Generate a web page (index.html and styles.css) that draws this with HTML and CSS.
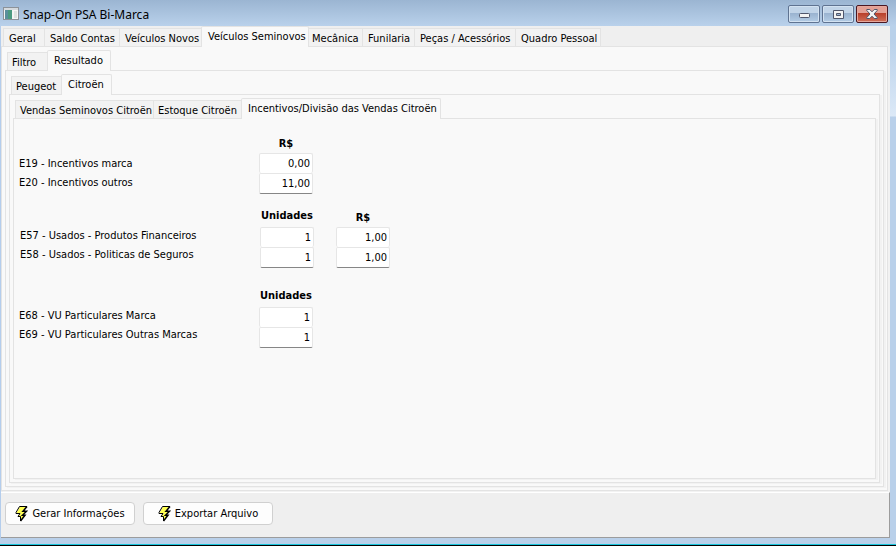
FILE: index.html
```
<!DOCTYPE html>
<html lang="pt-BR">
<head>
    <meta charset="UTF-8">
    <meta name="viewport" content="width=device-width, initial-scale=1.0">
    <title>Snap-On PSA Bi-Marca</title>
    <link rel="stylesheet" href="styles.css">
</head>
<body>
    <header class="titlebar">
        <svg class="app-icon" width="16" height="14" viewBox="0 0 16 14" aria-hidden="true">
            <rect x="0.5" y="0.5" width="15" height="12" fill="#f4f4f4" stroke="#8c9299"/>
            <rect x="1" y="1" width="14" height="2" fill="#d5dade"/>
            <rect x="2" y="3" width="7" height="9" fill="#4b9a80"/>
            <rect x="2" y="3" width="3" height="9" fill="#5a8f9c"/>
            <rect x="11" y="4" width="3" height="7" fill="#dde3e0"/>
        </svg>
        <h1>Snap-On PSA Bi-Marca</h1>
        <div class="window-buttons">
            <button type="button" class="win-btn" aria-label="Minimizar">
                <svg width="11" height="5" viewBox="0 0 11 5"><rect x="0.5" y="0.5" width="10" height="4" rx="1" fill="#f3f3f3" stroke="#50566b"/></svg>
            </button>
            <button type="button" class="win-btn win-max" aria-label="Maximizar">
                <svg width="11" height="9" viewBox="0 0 11 9"><path fill-rule="evenodd" fill="#f3f3f3" stroke="#50566b" d="M.5.5h10v8H.5zM3.500 3.500v2h4v-2z"/></svg>
            </button>
            <button type="button" class="win-btn win-close" aria-label="Fechar">
                <svg width="12" height="10" viewBox="0 0 12 10"><path fill="#f3f3f3" stroke="#50566b" d="M.8.5h3L6 2.800 8.200.5h3v1L8 5l3.200 3.500v1h-3L6 7.200 3.800 9.500h-3v-1L4 5 .8 1.500z"/></svg>
            </button>
        </div>
    </header>

    <main class="window">
        <div class="tabs tabs-main" role="tablist">
            <button type="button" role="tab" class="tab">Geral</button>
            <button type="button" role="tab" class="tab">Saldo Contas</button>
            <button type="button" role="tab" class="tab">Veículos Novos</button>
            <button type="button" role="tab" class="tab active" aria-selected="true">Veículos Seminovos</button>
            <button type="button" role="tab" class="tab">Mecânica</button>
            <button type="button" role="tab" class="tab">Funilaria</button>
            <button type="button" role="tab" class="tab">Peças / Acessórios</button>
            <button type="button" role="tab" class="tab">Quadro Pessoal</button>
        </div>
        <section class="panel panel-main">
            <div class="tabs tabs-view" role="tablist">
                <button type="button" role="tab" class="tab">Filtro</button>
                <button type="button" role="tab" class="tab active" aria-selected="true">Resultado</button>
            </div>
            <section class="panel">
                <div class="tabs tabs-brand" role="tablist">
                    <button type="button" role="tab" class="tab">Peugeot</button>
                    <button type="button" role="tab" class="tab active" aria-selected="true">Citroën</button>
                </div>
                <section class="panel">
                    <div class="tabs tabs-report" role="tablist">
                        <button type="button" role="tab" class="tab">Vendas Seminovos Citroën</button>
                        <button type="button" role="tab" class="tab">Estoque Citroën</button>
                        <button type="button" role="tab" class="tab active" aria-selected="true">Incentivos/Divisão das Vendas Citroën</button>
                    </div>
                    <section class="panel panel-form">
                        <form id="reportForm">
                            <div class="group group-incentivos">
                                <div class="labels">
                                    <label for="e19">E19 - Incentivos marca</label>
                                    <label for="e20">E20 - Incentivos outros</label>
                                </div>
                                <div class="fields">
                                    <h2 class="money">R$</h2>
                                    <input type="text" id="e19" value="0,00">
                                    <input type="text" id="e20" value="11,00">
                                </div>
                            </div>
                            <div class="group group-usados">
                                <div class="labels">
                                    <label for="e57">E57 - Usados - Produtos Financeiros</label>
                                    <label for="e58">E58 - Usados - Politicas de Seguros</label>
                                </div>
                                <div class="fields">
                                    <h2>Unidades</h2>
                                    <input type="text" id="e57" value="1">
                                    <input type="text" id="e58" value="1">
                                </div>
                                <div class="fields">
                                    <h2 class="money">R$</h2>
                                    <input type="text" aria-label="E57 R$" value="1,00">
                                    <input type="text" aria-label="E58 R$" value="1,00">
                                </div>
                            </div>
                            <div class="group group-vu">
                                <div class="labels">
                                    <label for="e68">E68 - VU Particulares Marca</label>
                                    <label for="e69">E69 - VU Particulares Outras Marcas</label>
                                </div>
                                <div class="fields">
                                    <h2>Unidades</h2>
                                    <input type="text" id="e68" value="1">
                                    <input type="text" id="e69" value="1">
                                </div>
                            </div>
                        </form>
                    </section>
                </section>
            </section>
        </section>
        <footer class="actions">
            <button type="button" class="action-btn">
                <svg width="13" height="16" viewBox="0 0 13 16" aria-hidden="true"><path fill="#ffff50" d="M5 1h6L7 5.500h4L6.500 9.500H9L6 14v-3.500H3L6 7H1.500z"/><path fill="none" stroke="#000" d="M12 .5H4.500L1 6.500V7.500h4L3 10.500h2.500V15"/><path fill="none" stroke="#000" stroke-width="1.500" d="M12 .5 8 5.200h3.500L7.500 9.200H10L5.500 15"/></svg>
                Gerar Informações
            </button>
            <button type="button" class="action-btn">
                <svg width="13" height="16" viewBox="0 0 13 16" aria-hidden="true"><path fill="#ffff50" d="M5 1h6L7 5.500h4L6.500 9.500H9L6 14v-3.500H3L6 7H1.500z"/><path fill="none" stroke="#000" d="M12 .5H4.500L1 6.500V7.500h4L3 10.500h2.500V15"/><path fill="none" stroke="#000" stroke-width="1.500" d="M12 .5 8 5.200h3.500L7.500 9.200H10L5.500 15"/></svg>
                Exportar Arquivo
            </button>
        </footer>
    </main>
    <div class="taskbar"></div>
</body>
</html>
```
FILE: styles.css
```
* {
    box-sizing: border-box;
}
body {
    font-family: "DejaVu Sans Condensed", "DejaVu Sans", Tahoma, sans-serif;
    font-size: 11px;
    color: #000;
    margin: 0;
    min-height: 100vh;
    display: flex;
    flex-direction: column;
    background: linear-gradient(#b9d1ea 40px, #dce9f7 116px, #b9d0ea 117px);
}
button, input {
    font: inherit;
    color: inherit;
}

/* title bar */
.titlebar {
    display: flex;
    align-items: center;
    height: 26px;
    padding: 0 8px 0 3px;
    background: linear-gradient(#9bb5d2, #b9d1eb);
}
.titlebar h1 {
    flex: 1;
    margin: 0 0 0 4px;
    padding-top: 3px;
    font: 12px "Noto Sans", "Open Sans", sans-serif;
}
.app-icon {
    margin-top: 2px;
}
.window-buttons {
    display: flex;
    gap: 2px;
    padding-top: 2px;
}
.win-btn {
    display: flex;
    align-items: center;
    justify-content: center;
    width: 32px;
    height: 18px;
    padding: 0;
    border: 1px solid #5f7391;
    border-radius: 2px;
    box-shadow: inset 0 0 0 1px #d3e2f1;
    background: linear-gradient(#c1d4e8 45%, #9ab3d0 46%, #b3cce5);
}
.win-btn:first-child {
    padding-top: 3px;
}
.win-close {
    border-color: #4a1722;
    box-shadow: inset 0 0 0 1px #e5a79c;
    background: linear-gradient(#e3a095 45%, #b9402b 46%, #d0705a);
}

/* window */
.window {
    flex: 1;
    display: flex;
    flex-direction: column;
    margin: 0 6px 6px 0;
    border-left: 1px solid #b4cdec;
    background: #efefef;
}
.tabs {
    display: grid;
    align-items: end;
    height: 20px;
    padding-left: 2px;
}
.tabs-main {
    grid-template-columns: 41px 75px 82px 107px 54px 52px 101px 86px;
}
.tabs-view {
    grid-template-columns: 40px 63px;
}
.tabs-brand {
    grid-template-columns: 50px 50px;
}
.tabs-report {
    grid-template-columns: 138px 88px 199px;
}
.tab {
    height: 18px;
    padding: 2px 0 0 4px;
    border: 1px solid #e3e3e3;
    border-right: none;
    border-bottom: none;
    background: #f2f2f2;
    text-align: left;
    white-space: nowrap;
}
.tabs-main .tab {
    padding-left: 5px;
}
.tab:last-child {
    border-right: 1px solid #e3e3e3;
}
.tab.active {
    height: 21px;
    margin: 0 -1px -1px 0;
    padding: 0 0 1px 6px;
    border: 1px solid #e3e3e3;
    border-bottom: none;
    border-radius: 2px 2px 0 0;
    background: #f9f9f9;
    z-index: 1;
}
.tab.active + .tab {
    padding-left: 3px;
}
.panel {
    flex: 1;
    display: flex;
    flex-direction: column;
    padding: 3px;
    border: 1px solid #e3e3e3;
    box-shadow: 2px 1px 0 #f2f2f2;
    background: #f9f9f9;
}
.panel-main {
    margin-right: 2px;
}

/* form */
.panel-form {
    padding: 17px 5px;
}
.group {
    display: flex;
    align-items: flex-end;
}
.group-usados {
    margin-top: 14px;
    padding-left: 1px;
}
.group-vu {
    margin-top: 20px;
}
.labels {
    width: 240px;
    margin-bottom: 4px;
}
.group-incentivos .labels {
    margin-bottom: 2px;
}
.labels label {
    display: block;
    line-height: 19px;
}
.fields {
    display: flex;
    flex-direction: column;
    width: 54px;
    margin-right: 22px;
}
.fields h2 {
    margin: 0 0 3px;
    font-size: 11px;
    line-height: 16px;
    text-align: center;
}
.fields .money {
    margin-bottom: 1px;
}
.fields input {
    width: 100%;
    height: 20px;
    padding: 0 2px;
    border: 1px solid #e6e6e6;
    border-bottom: none;
    border-radius: 2px;
    background: #fff;
    text-align: right;
}
.fields input:last-child {
    height: 21px;
    border-bottom: 1px solid #868686;
}

/* bottom buttons */
.actions {
    display: flex;
    gap: 8px;
    margin-top: 1px;
    padding: 9px 4px 12px;
    border-top: 1px solid #fff;
    border-right: 1px solid #9c9c9c;
    border-bottom: 1px solid #9c9c9c;
}
.action-btn {
    display: flex;
    align-items: center;
    justify-content: center;
    gap: 4px;
    width: 130px;
    height: 23px;
    padding: 0;
    border: 1px solid #d0d0d0;
    border-radius: 4px;
    background: #fdfdfd;
}
.taskbar {
    height: 2px;
    border-top: 1px solid #18c5dc;
    background: #000;
}
```
